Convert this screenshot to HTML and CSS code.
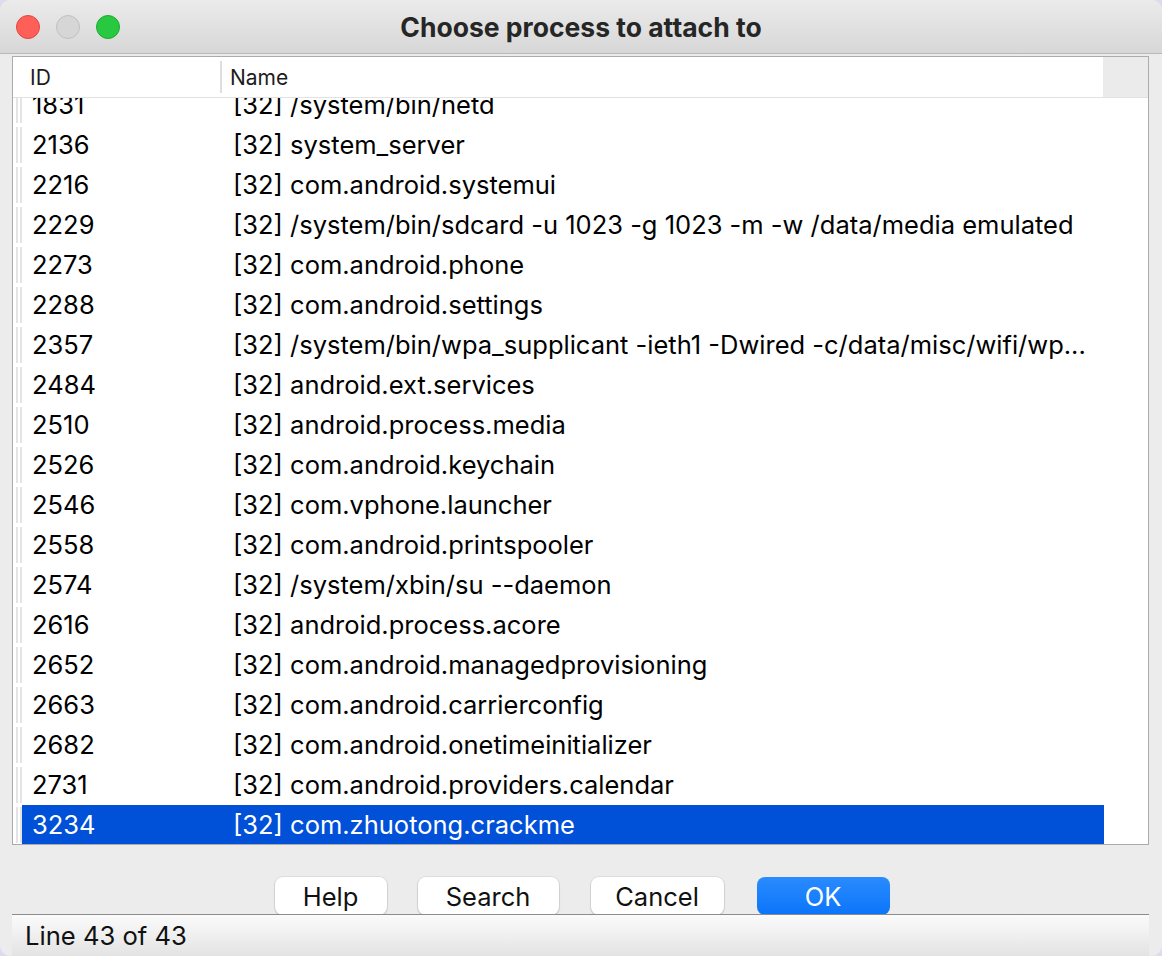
FILE: index.html
```html
<!DOCTYPE html>
<html>
<head>
<meta charset="utf-8">
<link rel="stylesheet" href="styles.css">
</head>
<body>
<div class="window">
  <div class="titlebar">
    <div class="lights">
      <span class="light red"></span>
      <span class="light gray"></span>
      <span class="light green"></span>
    </div>
    <div class="title">Choose process to attach to</div>
  </div>
  <div class="content">
    <div class="table">
      <div class="thead">
        <div class="th th-gutter"></div>
        <div class="th th-id">ID</div>
        <div class="th th-name">Name</div>
        <div class="th th-fill"></div>
      </div>
      <div class="tbody">
        <div class="rows">
          <div class="row"><span class="gutter"></span><span class="c-id">1831</span><span class="c-name">[32] /system/bin/netd</span></div>
          <div class="row"><span class="gutter"></span><span class="c-id">2136</span><span class="c-name">[32] system_server</span></div>
          <div class="row"><span class="gutter"></span><span class="c-id">2216</span><span class="c-name">[32] com.android.systemui</span></div>
          <div class="row"><span class="gutter"></span><span class="c-id">2229</span><span class="c-name">[32] /system/bin/sdcard -u 1023 -g 1023 -m -w /data/media emulated</span></div>
          <div class="row"><span class="gutter"></span><span class="c-id">2273</span><span class="c-name">[32] com.android.phone</span></div>
          <div class="row"><span class="gutter"></span><span class="c-id">2288</span><span class="c-name">[32] com.android.settings</span></div>
          <div class="row"><span class="gutter"></span><span class="c-id">2357</span><span class="c-name">[32] /system/bin/wpa_supplicant -ieth1 -Dwired -c/data/misc/wifi/wp...</span></div>
          <div class="row"><span class="gutter"></span><span class="c-id">2484</span><span class="c-name">[32] android.ext.services</span></div>
          <div class="row"><span class="gutter"></span><span class="c-id">2510</span><span class="c-name">[32] android.process.media</span></div>
          <div class="row"><span class="gutter"></span><span class="c-id">2526</span><span class="c-name">[32] com.android.keychain</span></div>
          <div class="row"><span class="gutter"></span><span class="c-id">2546</span><span class="c-name">[32] com.vphone.launcher</span></div>
          <div class="row"><span class="gutter"></span><span class="c-id">2558</span><span class="c-name">[32] com.android.printspooler</span></div>
          <div class="row"><span class="gutter"></span><span class="c-id">2574</span><span class="c-name">[32] /system/xbin/su --daemon</span></div>
          <div class="row"><span class="gutter"></span><span class="c-id">2616</span><span class="c-name">[32] android.process.acore</span></div>
          <div class="row"><span class="gutter"></span><span class="c-id">2652</span><span class="c-name">[32] com.android.managedprovisioning</span></div>
          <div class="row"><span class="gutter"></span><span class="c-id">2663</span><span class="c-name">[32] com.android.carrierconfig</span></div>
          <div class="row"><span class="gutter"></span><span class="c-id">2682</span><span class="c-name">[32] com.android.onetimeinitializer</span></div>
          <div class="row"><span class="gutter"></span><span class="c-id">2731</span><span class="c-name">[32] com.android.providers.calendar</span></div>
          <div class="row selected"><span class="gutter"></span><span class="c-id">3234</span><span class="c-name">[32] com.zhuotong.crackme</span></div>
        </div>
      </div>
    </div>
    <div class="buttons">
      <button class="btn btn-help">Help</button>
      <button class="btn btn-search">Search</button>
      <button class="btn btn-cancel">Cancel</button>
      <button class="btn btn-ok">OK</button>
    </div>
  </div>
  <div class="statusbar">Line 43 of 43</div>
</div>
</body>
</html>
```
FILE: styles.css
```css
html, body {
  margin: 0;
  padding: 0;
  background: #dcdcf0;
}
body {
  width: 1162px;
  height: 956px;
  overflow: hidden;
  font-family: "Inter", "Liberation Sans", sans-serif;
}
.window {
  width: 1162px;
  height: 956px;
  background: #ececec;
  border-radius: 11px;
  overflow: hidden;
  display: flex;
  flex-direction: column;
  box-sizing: border-box;
}
.titlebar {
  height: 54px;
  flex: none;
  display: flex;
  align-items: center;
  background: linear-gradient(#ebebeb, #d7d7d7);
  border-bottom: 1px solid #b9b9b9;
  box-sizing: border-box;
  position: relative;
}
.lights {
  display: flex;
  gap: 16px;
  padding-left: 16px;
}
.light {
  width: 24px;
  height: 24px;
  border-radius: 50%;
  box-sizing: border-box;
}
.light.red { background: #fe5f57; border: 1px solid #e2463f; }
.light.gray { background: #d6d6d6; border: 1px solid #c0c0c0; }
.light.green { background: #28c840; border: 1px solid #1eaa30; }
.title {
  position: absolute;
  left: 0;
  right: 0;
  top: 0;
  height: 54px;
  line-height: 54px;
  text-align: center;
  font-weight: 700;
  font-size: 26.5px;
  color: #262626;
  pointer-events: none;
}
.content {
  flex: 1;
  display: flex;
  flex-direction: column;
  padding: 2px 13px 0 12px;
}
.table {
  height: 789px;
  border: 1px solid #ababab;
  background: #fff;
  box-sizing: border-box;
  display: flex;
  flex-direction: column;
  overflow: hidden;
}
.thead {
  height: 41px;
  flex: none;
  display: flex;
  border-bottom: 1px solid #e2e2e2;
  box-sizing: border-box;
  font-size: 21px;
  color: #1c1c1c;
}
.th {
  display: flex;
  align-items: center;
  background: #fff;
}
.th-gutter { width: 9px; }
.th-id { width: 190px; padding-left: 8px; border-right: 2px solid #dedede; height: 32px; align-self: center; }
.th-name { width: 873px; padding-left: 8px; }
.th-fill { flex: 1; background: #ebebeb; }
.tbody {
  flex: 1;
  overflow: hidden;
}
.rows {
  margin-top: -13px;
}
.row {
  height: 40px;
  display: flex;
  align-items: center;
  font-size: 25.5px;
  color: #000;
}
.gutter {
  width: 9px;
  height: 36px;
  box-sizing: border-box;
  border-right: 2px solid #e4e4e4;
  flex: none;
  background: #fff;
  box-shadow: inset 3px 0 0 #fff, inset 5px 0 0 #e4e4e4;
}
.c-id {
  width: 199px;
  padding-left: 10px;
  box-sizing: border-box;
  flex: none;
  height: 40px;
  line-height: 40px;
}
.c-name {
  width: 883px;
  padding-left: 12px;
  box-sizing: border-box;
  flex: none;
  height: 40px;
  line-height: 40px;
  white-space: nowrap;
  overflow: hidden;
  text-overflow: ellipsis;
}
.row.selected .c-id,
.row.selected .c-name {
  background: #0050d8;
  color: #fff;
}
.buttons {
  flex: 1;
  display: flex;
  justify-content: center;
  align-items: flex-end;
  gap: 31px;
  padding-left: 3px;
}
.btn {
  height: 38px;
  border: none;
  border-radius: 8px;
  background: #fff;
  box-shadow: 0 0 0 1px rgba(0,0,0,0.06), 0 1px 2px rgba(0,0,0,0.18);
  font-family: inherit;
  font-size: 25.5px;
  color: #111;
  padding: 0;
  margin-bottom: -1px;
}
.btn-help { width: 112px; }
.btn-search { width: 141px; }
.btn-cancel { width: 133px; margin-left: 1px; }
.btn-ok {
  width: 133px;
  margin-left: 2px;
  background: linear-gradient(#2a8bff, #0b75f9);
  color: #fff;
  box-shadow: none;
}
.statusbar {
  height: 42px;
  flex: none;
  margin: 0 13px 0 12px;
  border-top: 1px solid #8c8c8c;
  background: linear-gradient(#fbfbfb, #e3e3e3);
  box-sizing: border-box;
  font-size: 25.6px;
  color: #111;
  padding-left: 13px;
  line-height: 42px;
  position: relative;
  z-index: 1;
}
```
